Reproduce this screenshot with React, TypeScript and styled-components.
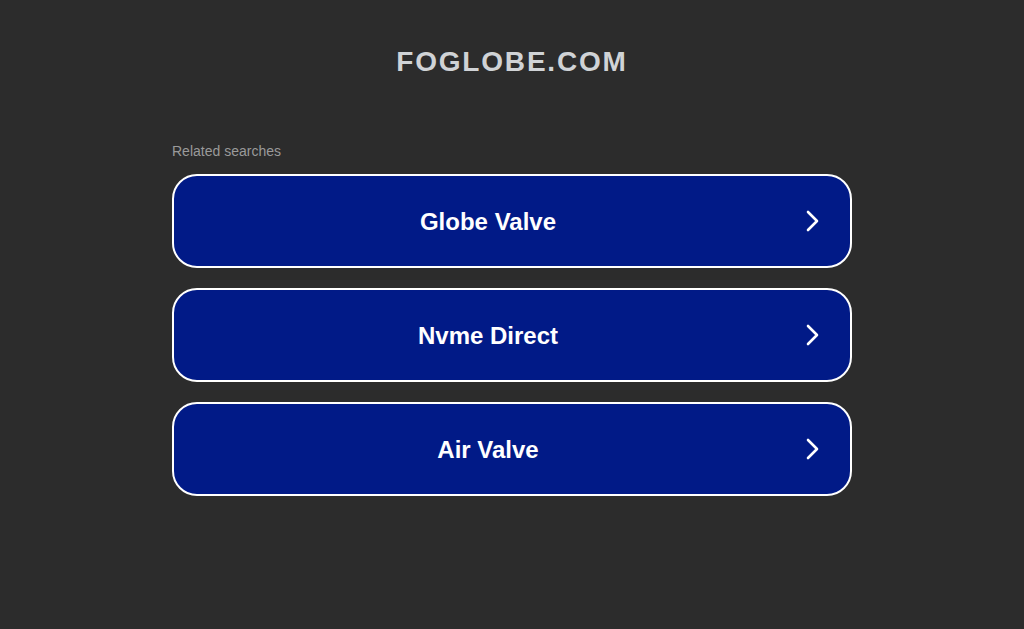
import React from 'react';
import styled, { createGlobalStyle } from 'styled-components';

const GlobalStyle = createGlobalStyle`
  html, body {
    margin: 0;
    padding: 0;
    background: #2c2c2c;
  }
  body {
    font-family: Arial, "Liberation Sans", sans-serif;
  }
`;

const searches = ['Globe Valve', 'Nvme Direct', 'Air Valve'];

const Chevron = () => (
  <svg width="16" height="24" viewBox="0 0 16 24" fill="none">
    <path
      d="M3 3 L12 12 L3 21"
      stroke="#ffffff"
      strokeWidth="2.6"
      strokeLinecap="round"
      strokeLinejoin="round"
    />
  </svg>
);

const App = () => {
  return (
    <Page>
      <GlobalStyle />
      <Domain>FOGLOBE.COM</Domain>
      <Content>
        <Label>Related searches</Label>
        <List>
          {searches.map((s) => (
            <SearchLink key={s} href="#">
              <LinkText>{s}</LinkText>
              <Arrow>
                <Chevron />
              </Arrow>
            </SearchLink>
          ))}
        </List>
      </Content>
    </Page>
  );
};

const Page = styled.div`
  min-height: 629px;
  background: #2c2c2c;
  display: flex;
  flex-direction: column;
  align-items: center;
  padding-top: 45px;
  box-sizing: border-box;
`;

const Domain = styled.h1`
  margin: 0;
  font-size: 28px;
  line-height: 34px;
  font-weight: 700;
  letter-spacing: 1.8px;
  color: #d0d3d6;
`;

const Content = styled.div`
  width: 680px;
  margin-top: 64px;
  display: flex;
  flex-direction: column;
`;

const Label = styled.div`
  font-size: 14px;
  line-height: 16px;
  color: #9a9a9a;
  margin-bottom: 15px;
`;

const List = styled.div`
  display: flex;
  flex-direction: column;
  gap: 20px;
`;

const SearchLink = styled.a`
  display: flex;
  align-items: center;
  height: 94px;
  box-sizing: border-box;
  border: 2px solid #ffffff;
  border-radius: 25px;
  background: #011a87;
  text-decoration: none;
  padding: 2px 29px 0 0;
`;

const LinkText = styled.span`
  flex: 1;
  text-align: center;
  font-size: 24px;
  font-weight: 700;
  color: #ffffff;
`;

const Arrow = styled.span`
  display: flex;
  align-items: center;
  padding-left: 3px;
  margin-top: -2px;
`;

export default App;
